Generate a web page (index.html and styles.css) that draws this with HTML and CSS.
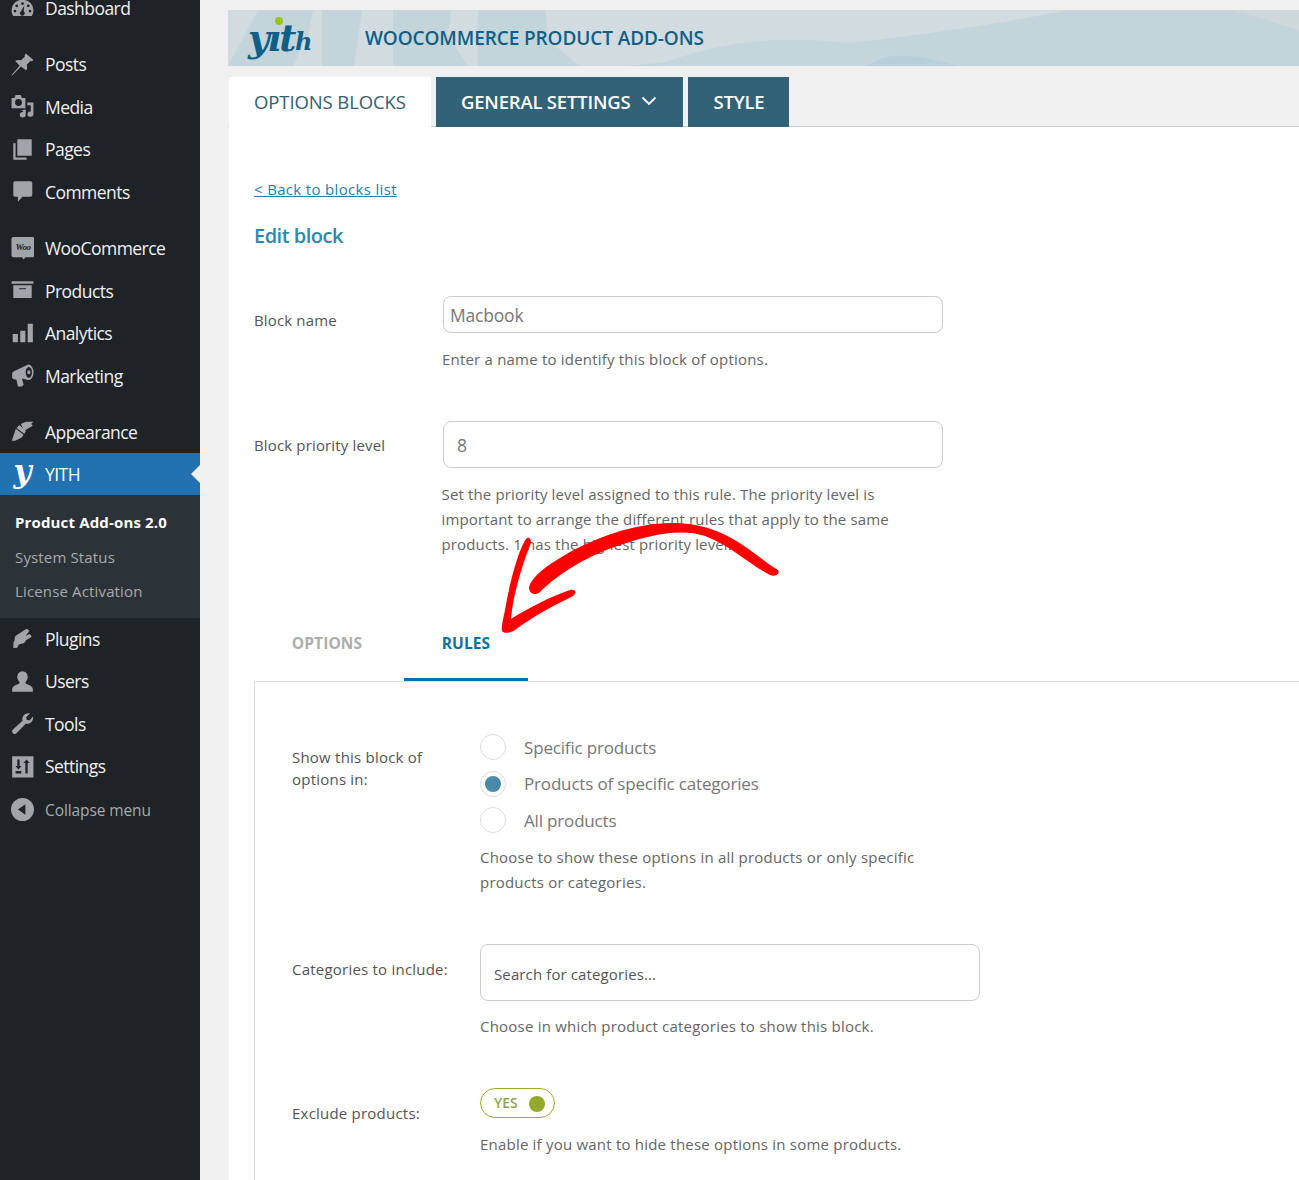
FILE: index.html
```html
<!DOCTYPE html>
<html lang="en">
<head>
<meta charset="utf-8">
<title>Edit block</title>
<link rel="stylesheet" href="styles.css">
</head>
<body>
<div class="page">
<nav class="sidebar">
  <ul class="menu">
    <li class="item"><svg class="ico" viewBox="0 0 20 20"><path d="M10 2.500a9 9 0 0 0-9.500 9.300c0 2 .6 3.500 1.500 4.700h16c.9-1.200 1.500-2.700 1.500-4.700A9 9 0 0 0 10 2.500zM10 4.500a1.200 1.200 0 1 1 0 2.400 1.200 1.200 0 0 1 0-2.400zM5 6.500a1.200 1.200 0 1 1 0 2.400 1.200 1.200 0 0 1 0-2.400zM15 6.500a1.200 1.200 0 1 1 0 2.400 1.200 1.200 0 0 1 0-2.400zM3.500 11a1.200 1.200 0 1 1 0 2.400 1.200 1.200 0 0 1 0-2.400zM16.500 11a1.200 1.200 0 1 1 0 2.400 1.200 1.200 0 0 1 0-2.400zM11.500 7.500l-.5 5.100a2 2 0 1 1-2.400.1z" fill-rule="evenodd"/></svg><span>Dashboard</span></li>
    <li class="item sep"><svg class="ico" viewBox="0 0 20 20"><path d="M13 .5l6.500 5.500-1.500 1.300-1-.6-3.300 3.600c.6 2 .4 3.700-.5 5L8.700 11.800 1 19.500l-.5-.3L7.500 11 3.600 7c1.500-1 3.300-1.200 5.200-.6l3.400-3.500-.4-1z"/></svg><span>Posts</span></li>
    <li class="item"><svg class="ico" viewBox="0 0 20 20"><path fill-rule="evenodd" d="M.5 2.500h2.500l1-2.500h4.500l1 2.500h3v9H.5zM6.500 3.500a3 3 0 1 0 0 6 3 3 0 0 0 0-6zM19.500 6.500v10.500a2.600 2.300 0 1 1-2.300-2.600V9h-3V6.500zM8.500 13.500l4.300-1v5a2.600 2.300 0 1 1-2.300-2.600v-.9z"/></svg><span>Media</span></li>
    <li class="item"><svg class="ico" viewBox="0 0 20 20"><path d="M5.500 1h12.500v14.500h-12.500zM2 4.500h2v12.500h9.500V19H2z"/></svg><span>Pages</span></li>
    <li class="item"><svg class="ico" viewBox="0 0 20 20"><path d="M3.500 1h13.500q1.500 0 1.500 1.500v10.500q0 1.500-1.500 1.500H10l-4 4.500v-4.500H3.500Q2 14.500 2 13V2.500Q2 1 3.500 1z"/></svg><span>Comments</span></li>
    <li class="item sep woo-row"><svg class="ico woo" viewBox="0 0 24 24"><path d="M2.500 0h20Q24.500 0 24.500 2v17q0 2-2 2H15l-1.800 2.500L11.500 21H2.500q-2 0-2-2V2q0-2 2-2z"/><text x="12.500" y="13.500" class="woo-text">Woo</text></svg><span>WooCommerce</span></li>
    <li class="item"><svg class="ico" viewBox="0 0 20 20"><path fill-rule="evenodd" d="M.5 2h19v2.200H.5zM2 5.500h16V16.500H2zM7 8v1h6V8z"/></svg><span>Products</span></li>
    <li class="item"><svg class="ico" viewBox="0 0 20 20"><path d="M1.500 10.500h4.500v7H1.500zM8 7.500h4.500v10H8zM14.500 1.500H19v16h-4.500z"/></svg><span>Analytics</span></li>
    <li class="item"><svg class="ico" viewBox="0 0 20 20"><path fill-rule="evenodd" d="M15 .5a4.500 6.500 0 1 1-.1 13.500L9.500 12.500l1.500 5.500-1.500 1.500H6l-1.300-6H3a2.500 2.500 0 0 1-2-3v-2a2.500 2.500 0 0 1 2-2.500zM15.500 2.500a2.600 4.500 0 1 0 0 9.500 2.600 4.500 0 0 0 0-9.500zM15.500 5.500a1.200 1.500 0 1 1 0 3.500 1.200 1.500 0 0 1 0-3.500z"/></svg><span>Marketing</span></li>
    <li class="item sep"><svg class="ico" viewBox="0 0 20 20"><path d="M8.500 3.500L13 1.500h6.500l-2 2 1.500 1.500-6 3.500-1.500.5zM7.300 4.300l5.700 5.200-1.500 2.500-6.700-5zM4.200 7.500l6.500 5.200-1 2.300-6 3-3 0z"/></svg><span>Appearance</span></li>
    <li class="item current"><span class="y-mark">y</span><span>YITH</span></li>
    <li class="submenu">
      <a class="sub strong">Product Add-ons 2.0</a>
      <a class="sub">System Status</a>
      <a class="sub">License Activation</a>
    </li>
    <li class="item"><svg class="ico" viewBox="0 0 20 20"><path d="M13.500 1.500l2.500 1.500-3 4.500 3.500-1.500 1.500 2.500-5 3c-.5 2-2 3-4 3l-2.500 1-1 2.500-3.500.3.200-5.300c1-1 1-1.800 1-3.300 0-1.500 1-2.500 3-3.500z"/></svg><span>Plugins</span></li>
    <li class="item"><svg class="ico" viewBox="0 0 20 20"><path d="M10 1a4.500 5 0 0 1 4 7.500c-.8 1.500-1.500 2-1.500 2.700 0 1.300 6.500 1.800 6.500 5.300V19H1v-2.500c0-3.500 6.500-4 6.500-5.300 0-.7-.7-1.200-1.500-2.700A4.500 5 0 0 1 10 1z"/></svg><span>Users</span></li>
    <li class="item"><svg class="ico" viewBox="0 0 20 20"><path d="M14.500 1a5 5 0 0 1 2 .4l-3.300 3.100.5 2.300 2.300.5 3.100-3.300A5 5 0 0 1 13 10l-8 8.200a2 2 0 0 1-3.500-2.700L10 7.500a5.200 5.200 0 0 1 4.500-6.500z"/></svg><span>Tools</span></li>
    <li class="item"><svg class="ico" viewBox="0 0 20 20"><path fill-rule="evenodd" d="M1 1h18.500v18.500H1zM5.500 4v5.500H3.800l2.700 3 2.700-3H7.500V4zM4 14v2h5v-2zM13.500 4l-2.700 3h1.700v9h2V7h1.700z"/></svg><span>Settings</span></li>
    <li class="item collapse"><svg class="ico" viewBox="0 0 20 20"><path fill-rule="evenodd" d="M10 0a10 10 0 1 1 0 20 10 10 0 0 1 0-20zM12.500 5.500L6 10l6.500 4.500z"/></svg><span>Collapse menu</span></li>
  </ul>
</nav>
<main class="main">
  <header class="banner">
    <svg class="banner-art" viewBox="0 0 1071 56" preserveAspectRatio="none"><path d="M0 0H840C720 25 560 40 400 56H0z" fill="#d1dbe0"/><path d="M30 0h55l-5 25-15 31H0zM94 0h40l-8 56H94zM165 0h58l-3 25 20 31H165zM250 0h67l3 30 32 26H250z" fill="#c3d4db"/><path d="M428 56C480 35 530 28 580 30C620 32 660 35 700 56z" fill="#c4d5dc"/><path d="M640 56C660 42 680 42 730 56z" fill="#b7cfda"/><path d="M1005 0h66v20z" fill="#cfd9dc"/></svg>
    <div class="logo"><span class="logo-y">y</span><span class="logo-i">ı<i class="logo-dot"></i></span><span class="logo-t">t</span><span class="logo-h">h</span></div>
    <h1 class="plugin">WOOCOMMERCE PRODUCT ADD-ONS</h1>
  </header>
  <div class="tabs">
    <div class="tab active">OPTIONS BLOCKS</div>
    <div class="tab dark">GENERAL SETTINGS <svg class="chev" viewBox="0 0 16 10"><path d="M1.500 1.500L8 8l6.500-6.500" fill="none" stroke="#fff" stroke-width="1.800"/></svg></div>
    <div class="tab dark">STYLE</div>
  </div>
  <section class="panel">
    <a class="back">&lt; Back to blocks list</a>
    <h2 class="title">Edit block</h2>
    <div class="field name-field">
      <label class="label">Block name</label>
      <div class="control">
        <div class="input">Macbook</div>
        <p class="desc">Enter a name to identify this block of options.</p>
      </div>
    </div>
    <div class="field prio-field">
      <label class="label">Block priority level</label>
      <div class="control">
        <div class="input tall">8</div>
        <p class="desc wide">Set the priority level assigned to this rule. The priority level is important to arrange the different rules that apply to the same products. 1 has the highest priority level.</p>
      </div>
    </div>
    <div class="subtabs">
      <div class="subtab">OPTIONS</div>
      <div class="subtab on">RULES</div>
    </div>
    <div class="rules">
      <div class="rule show-rule">
        <label class="rlabel show-label">Show this block of options in:</label>
        <div class="rcontrol">
          <div class="radio"><i class="dot"></i><span>Specific products</span></div>
          <div class="radio"><i class="dot on"></i><span>Products of specific categories</span></div>
          <div class="radio"><i class="dot"></i><span>All products</span></div>
          <p class="desc rdesc">Choose to show these options in all products or only specific products or categories.</p>
        </div>
      </div>
      <div class="rule cat-rule">
        <label class="rlabel cat-label">Categories to include:</label>
        <div class="rcontrol">
          <div class="search">Search for categories...</div>
          <p class="desc rdesc">Choose in which product categories to show this block.</p>
        </div>
      </div>
      <div class="rule ex-rule">
        <label class="rlabel ex-label">Exclude products:</label>
        <div class="rcontrol">
          <div class="toggle"><span>YES</span><i class="knob"></i></div>
          <p class="desc rdesc">Enable if you want to hide these options in some products.</p>
        </div>
      </div>
    </div>
  </section>
  <svg class="arrow" viewBox="500 520 290 120"><path fill="#ff0000" d="M778 570C760 560 735 532 695 525C650 517 600 535 565 555C548 565 533 575 529 587C529 594 535 596 540 592C560 572 590 555 620 545C650 535 680 528 705 536C730 545 750 565 770 575C776 577 780 574 778 570Z"/><path fill="#ff0000" d="M527 538C520 545 510 580 505 610C503 620 501 628 502 631C504 634 510 633 515 630C535 615 555 605 573 596C578 592 575 589 570 590C550 597 530 607 511 619C513 595 522 565 531 543C531 538 529 537 527 538Z"/></svg>
</main>
</div>
</body>
</html>
```
FILE: styles.css
```css
* { box-sizing: border-box; }
html, body { margin: 0; padding: 0; height: 1180px; overflow: hidden; }
body { background: #f0f0f1; font-family: "Open Sans", "Noto Sans", sans-serif; color: #666; }
.page { display: flex; height: 1180px; overflow: hidden; }

/* sidebar */
.sidebar { width: 200px; flex: none; background: #1d2327; height: 1180px; overflow: hidden; }
.menu { list-style: none; margin: -13px 0 0; padding: 0; }
.item { display: flex; align-items: center; height: 42.5px; padding-left: 11px; color: #f0f0f1; font-size: 17.5px; letter-spacing: -.55px; }
.item.sep { margin-top: 13.5px; }
.item.woo-row { margin-top: 14px; }
.ico { width: 23px; height: 23px; margin-right: 11px; fill: #a0a5aa; flex: none; }
.woo-text { font: italic 700 9.5px "Liberation Serif", serif; fill: #1d2327; text-anchor: middle; }
.item.current { background: #2271b1; color: #fff; position: relative; height: 42px; margin-top: -.5px; }
.item.current::after { content: ""; position: absolute; right: 0; top: 12px; border: 9px solid transparent; border-left: 0; border-right-color: #f0f0f1; }
.y-mark { width: 23px; margin-right: 11px; font: italic 700 31px/30px "DejaVu Serif", serif; color: #fff; text-align: center; margin-top: -6px; letter-spacing: 0; }
.submenu { background: #2c3338; height: 123px; padding-top: 9.5px; display: flex; flex-direction: column; }
.sub { display: block; height: 34.5px; line-height: 36px; padding-left: 15px; font-size: 15px; letter-spacing: .15px; color: #a7aaad; }
.sub.strong { color: #fff; font-weight: 700; letter-spacing: .15px; }
.item.collapse { color: #a7aaad; font-size: 15.5px; letter-spacing: -.1px; margin-top: 1px; }

/* main */
.main { flex: 1; position: relative; padding: 10px 0 0 28px; min-width: 0; }
.banner { position: relative; height: 56px; background: #c4d4db; display: flex; align-items: center; overflow: hidden; }
.banner-art { position: absolute; left: 0; top: 0; width: 100%; height: 100%; }
.logo { position: relative; width: 137px; padding-left: 20px; color: #0f5f86; font: italic 700 37px/56px "DejaVu Serif", serif; letter-spacing: -2.2px; display: flex; align-items: center; margin-top: 0; flex: none; }
.logo-i { position: relative; }
.logo-dot { position: absolute; left: 8px; top: 7px; width: 8px; height: 8px; border-radius: 50%; background: #9dc31b; }
.logo-h { font-size: 24px; margin-top: 8px; margin-left: 1px; }
.plugin { position: relative; margin: 0; color: #0f5f86; font-size: 19px; font-weight: 600; letter-spacing: -.1px; }

.tabs { display: flex; gap: 5px; height: 50px; margin-top: 11px; border-bottom: 1px solid #ccc; padding-left: 1px; }
.tab { height: 50px; padding: 0 25px 2px; display: flex; align-items: center; font-size: 18.5px; letter-spacing: -.2px; flex: none; }
.tab.active { background: #fff; color: #33606f; width: 202px; letter-spacing: -.1px; }
.tab.dark { background: #326277; color: #fff; font-weight: 600; }
.chev { width: 16px; height: 10px; margin-left: 11px; margin-right: 1px; }

.panel { background: #fff; margin-left: 1px; height: 1053px; padding: 51px 0 0 25px; }
.back { display: block; font-size: 15px; line-height: 22px; color: #1f7fb0; text-decoration: underline; letter-spacing: .33px; }
.title { margin: 22px 0 0; font-size: 20px; line-height: 28px; font-weight: 600; color: #2b8ab0; letter-spacing: -.5px; }
.field { display: grid; grid-template-columns: 188px 500px; }
.name-field { margin-top: 46px; }
.prio-field { margin-top: 49px; }
.label { font-size: 15px; line-height: 22px; padding-top: 13px; color: #555; letter-spacing: .15px; }
.control { min-width: 0; margin-left: 1px; }
.input { width: 500px; height: 37px; border: 1px solid #ccc; border-radius: 8px; padding-left: 6px; font-size: 17.5px; line-height: 37px; color: #777; letter-spacing: -.2px; }
.input.tall { height: 47px; line-height: 47px; padding-left: 13px; }
.desc { margin: 14px 0 0 -1px; font-size: 15px; line-height: 25px; color: #666; letter-spacing: .2px; }
.desc.wide { width: 470px; margin-top: 14px; margin-left: -1.5px; letter-spacing: .15px; }
.subtabs { display: flex; margin-top: 63px; height: 62px; }
.subtab { width: 124px; text-align: center; font-size: 15.5px; font-weight: 700; line-height: 46px; color: #adadad; letter-spacing: .12px; margin-left: 11px; }
.subtab.on { color: #0b72a6; border-bottom: 3px solid #0073aa; margin-left: 15px; height: 61px; }
.rules { border: 1px solid #ddd; border-right: 0; height: 520px; margin-top: -1px; padding-left: 37px; }
.rule { display: grid; grid-template-columns: 188px 500px; }
.show-rule { padding-top: 51px; }
.cat-rule { margin-top: 49px; }
.ex-rule { margin-top: 49px; }
.rlabel { font-size: 15px; line-height: 22px; color: #555; letter-spacing: .22px; }
.show-label { padding-top: 13px; width: 150px; }
.cat-label { padding-top: 14px; }
.ex-label { padding-top: 14px; }
.rcontrol { min-width: 0; }
.radio { display: flex; align-items: center; height: 36.5px; font-size: 17px; color: #777; letter-spacing: -.17px; }
.radio:first-child { margin-top: -4px; }
.dot { width: 26px; height: 26px; border-radius: 50%; border: 1px solid #ddd; margin-right: 18px; display: block; flex: none; position: relative; }
.dot.on::after { content: ""; position: absolute; left: 4px; top: 4px; width: 16px; height: 16px; border-radius: 50%; background: #4b8aa8; }
.rdesc { margin: 6px 0 0; width: 470px; letter-spacing: .21px; }
.cat-rule .rdesc { margin-top: 13px; }
.ex-rule .rdesc { margin-top: 14px; }
.search { width: 500px; height: 57px; border: 1px solid #ccc; border-radius: 8px; padding-left: 13px; font-size: 15px; line-height: 59px; color: #555; letter-spacing: .12px; }
.toggle { width: 75px; height: 30px; border: 1px solid #9aad2c; border-radius: 15px; display: flex; align-items: center; padding-left: 13px; position: relative; font-size: 14px; font-weight: 600; color: #94a64a; }
.knob { position: absolute; right: 9px; top: 7px; width: 16px; height: 16px; border-radius: 50%; background: #94a92a; }

.arrow { position: absolute; left: 300px; top: 520px; width: 290px; height: 120px; }
```
